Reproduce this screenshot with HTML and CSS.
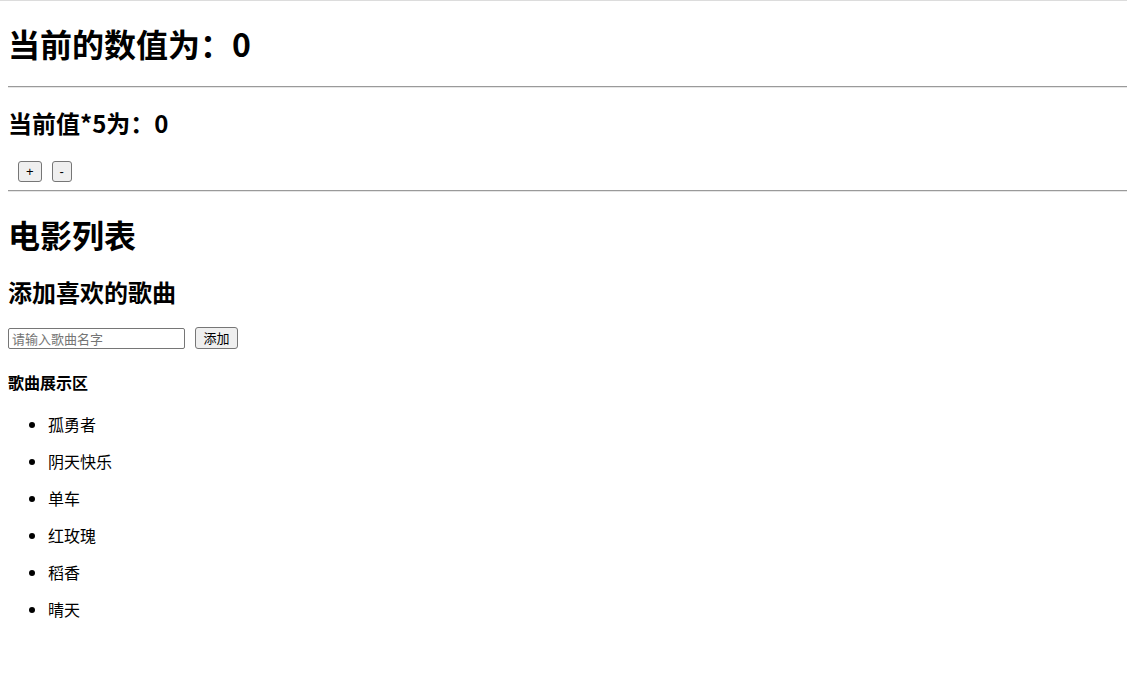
FILE: index.html
```html
<!DOCTYPE html>
<html lang="zh-CN">
<head>
  <meta charset="UTF-8">
  <meta name="viewport" content="width=device-width, initial-scale=1.0">
  <title>Vue 练习</title>
  <link rel="stylesheet" href="styles.css">
</head>
<body>
  <div class="topline"></div>
  <div id="app" class="app">
    <h1 class="title">当前的数值为：0</h1>
    <hr class="rule">
    <h2 class="sub">当前值*5为：0</h2>
    <div class="counter">
      <button class="btn">+</button>
      <button class="btn">-</button>
    </div>
    <hr class="rule">

    <h1 class="title movies">电影列表</h1>
    <h2 class="sub songs">添加喜欢的歌曲</h2>
    <div class="add-row">
      <input class="song-input" type="text" placeholder="请输入歌曲名字">
      <button class="btn add-btn">添加</button>
    </div>

    <h4 class="area">歌曲展示区</h4>
    <ul class="song-list">
      <li>孤勇者</li>
      <li>阴天快乐</li>
      <li>单车</li>
      <li>红玫瑰</li>
      <li>稻香</li>
      <li>晴天</li>
    </ul>
  </div>
</body>
</html>
```

FILE: styles.css
```css
body {
  margin: 0;
  font-family: "Noto Sans CJK SC", "Liberation Sans", sans-serif;
  color: #000;
  background: #fff;
}
.topline {
  height: 1px;
  background: #dcdcdc;
}
.app {
  padding-left: 8px;
}
.title {
  font-size: 32px;
  line-height: 40px;
  margin: 22px 0 23px;
}
.sub {
  font-size: 24px;
  line-height: 32px;
  margin: 19px 0 22px;
}
.movies {
  margin-bottom: 22px;
}
.songs {
  margin-top: 22px;
  margin-bottom: 20px;
}
.rule {
  margin: 8px 0;
  border: none;
  border-top: 1px solid #9a9a9a;
  border-bottom: 1px solid #e6e6e6;
  height: 0;
}
.counter {
  display: flex;
  gap: 10px;
  padding-left: 10px;
  height: 21px;
}
.btn {
  font-family: "Liberation Sans", "Noto Sans CJK SC", sans-serif;
  font-size: 13px;
  height: 21px;
  padding: 0 7px;
  background: #efefef;
  border: 1px solid #767676;
  border-radius: 3px;
  color: #000;
  line-height: 19px;
}
.add-row {
  display: flex;
  align-items: center;
  gap: 10px;
  height: 21px;
}
.song-input {
  box-sizing: border-box;
  width: 177px;
  height: 21px;
  margin: 0;
  padding: 0 3px;
  border: 1px solid #767676;
  border-radius: 2px;
  font-family: "Noto Sans CJK SC", sans-serif;
  font-size: 13px;
}
.song-input::placeholder {
  color: #757575;
}
.add-btn {
  height: 22px;
  width: 43px;
  padding: 0;
  font-family: "Noto Sans CJK SC", sans-serif;
  margin-top: -2px;
}
.area {
  font-size: 16px;
  line-height: 22px;
  margin: 22px 0 21px;
}
.song-list {
  margin: 0;
  padding-left: 40px;
}
.song-list li {
  font-size: 16px;
  line-height: 21px;
  margin-bottom: 16px;
}
```
